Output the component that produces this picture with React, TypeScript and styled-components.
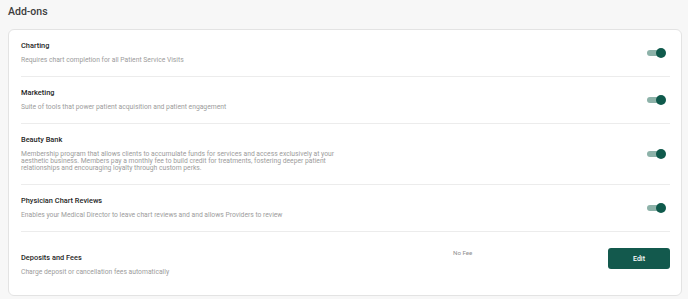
import { useState } from "react";
import styled, { createGlobalStyle } from "styled-components";

interface AddOn {
  id: string;
  title: string;
  description: string;
}

const addOns: AddOn[] = [
  {
    id: "charting",
    title: "Charting",
    description: "Requires chart completion for all Patient Service Visits",
  },
  {
    id: "marketing",
    title: "Marketing",
    description: "Suite of tools that power patient acquisition and patient engagement",
  },
  {
    id: "beauty-bank",
    title: "Beauty Bank",
    description:
      "Membership program that allows clients to accumulate funds for services and access exclusively at your aesthetic business. Members pay a monthly fee to build credit for treatments, fostering deeper patient relationships and encouraging loyalty through custom perks.",
  },
  {
    id: "chart-reviews",
    title: "Physician Chart Reviews",
    description:
      "Enables your Medical Director to leave chart reviews and and allows Providers to review",
  },
];

function App() {
  const [enabled, setEnabled] = useState<Record<string, boolean>>({
    charting: true,
    marketing: true,
    "beauty-bank": true,
    "chart-reviews": true,
  });

  const toggle = (id: string) =>
    setEnabled((prev) => ({ ...prev, [id]: !prev[id] }));

  return (
    <Page>
      <GlobalStyle />
      <Heading>Add-ons</Heading>
      <Card>
        {addOns.map((item) => (
          <Row key={item.id}>
            <Info>
              <Title>{item.title}</Title>
              <Description>{item.description}</Description>
            </Info>
            <Switch
              role="switch"
              aria-checked={enabled[item.id]}
              $on={enabled[item.id]}
              onClick={() => toggle(item.id)}
            >
              <Knob $on={enabled[item.id]} />
            </Switch>
          </Row>
        ))}
        <Row $roomy>
          <Info>
            <Title>Deposits and Fees</Title>
            <Description>Charge deposit or cancellation fees automatically</Description>
          </Info>
          <Fee>No Fee</Fee>
          <EditButton type="button">Edit</EditButton>
        </Row>
      </Card>
    </Page>
  );
}
export default App;

const GlobalStyle = createGlobalStyle`
  html, body {
    margin: 0;
    background: #f7f7f7;
    font-family: Roboto, "Liberation Sans", Arial, sans-serif;
  }
`;

const Page = styled.div`
  padding: 3px 6px 0 8px;
  width: 688px;
  box-sizing: border-box;
`;

const Heading = styled.h1`
  margin: 0 0 8px;
  font-size: 10.5px;
  line-height: 18px;
  font-weight: 500;
  color: #3d3d3d;
`;

const Card = styled.div`
  background: #ffffff;
  border: 1px solid #e3e3e3;
  border-radius: 6px;
  padding: 0 11px 0 12px;
`;

const Row = styled.div<{ $roomy?: boolean }>`
  display: flex;
  align-items: center;
  padding: ${(p) => (p.$roomy ? "21px 0 19px" : "11px 0 12px")};
  border-bottom: 1px solid #ececec;
  &:last-child {
    border-bottom: none;
  }
`;

const Info = styled.div`
  flex: 1;
  display: flex;
  flex-direction: column;
  gap: 6px;
  max-width: 320px;
`;

const Title = styled.div`
  font-size: 7.4px;
  line-height: 10px;
  font-weight: 500;
  color: #1f1f1f;
`;

const Description = styled.div`
  font-size: 6.75px;
  line-height: 7px;
  color: #9c9c9c;
`;

const Switch = styled.button<{ $on: boolean }>`
  position: relative;
  margin-left: auto;
  margin-right: 4px;
  width: 19px;
  height: 11px;
  padding: 0;
  border: none;
  background: transparent;
  cursor: pointer;
  &::before {
    content: "";
    position: absolute;
    left: 0;
    top: 2.5px;
    width: 17px;
    height: 6px;
    border-radius: 3px;
    background: ${(p) => (p.$on ? "#8db2a9" : "#c8c8c8")};
  }
`;

const Knob = styled.span<{ $on: boolean }>`
  position: absolute;
  top: 0.5px;
  left: ${(p) => (p.$on ? "9px" : "0")};
  width: 10px;
  height: 10px;
  border-radius: 50%;
  background: ${(p) => (p.$on ? "#0f5a4c" : "#f2f2f2")};
`;

const Fee = styled.div`
  align-self: flex-start;
  margin: -4px 0 0 auto;
  width: 155px;
  font-size: 6.2px;
  line-height: 8px;
  color: #8f8f8f;
`;

const EditButton = styled.button`
  align-self: flex-start;
  margin-top: -5px;
  width: 62px;
  height: 21px;
  border: none;
  border-radius: 3px;
  background: #13594d;
  color: #ffffff;
  font-family: inherit;
  font-size: 7px;
  font-weight: 500;
  cursor: pointer;
`;
